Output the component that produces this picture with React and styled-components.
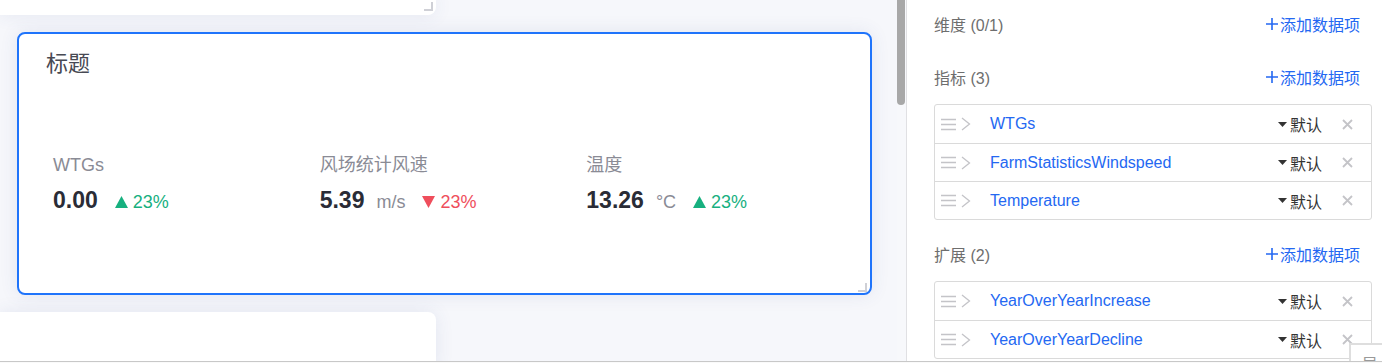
import React from "react";
import styled, { createGlobalStyle } from "styled-components";

const GlobalStyle = createGlobalStyle`
  html, body { margin: 0; padding: 0; background: #fff; }
  body { font-family: "Liberation Sans", "Noto Sans CJK SC", sans-serif; }
  * { box-sizing: border-box; }
`;

const Page = styled.div`
  position: relative;
  width: 1382px;
  height: 363px;
  overflow: hidden;
  display: flex;
`;

const Canvas = styled.div`
  width: 897px;
  flex-shrink: 0;
  height: 100%;
  background: #f6f7fb;
  display: flex;
  flex-direction: column;
  align-items: flex-start;
  gap: 17px;
`;

const Card = styled.div`
  position: relative;
  flex-shrink: 0;
  background: #fff;
  box-shadow: 0 0 18px rgba(60, 80, 150, 0.1);
`;

const TopCard = styled(Card)`
  width: 436px;
  height: 15px;
  border-radius: 0 0 8px 0;
`;

const BottomCard = styled(Card)`
  width: 436px;
  height: 60px;
  border-radius: 0 8px 0 0;
`;

const MainCard = styled(Card)`
  margin-left: 17px;
  width: 855px;
  height: 263px;
  border: 2px solid #1f74fb;
  border-radius: 8px;
  padding: 15px 27px;
`;

const Handle = styled.div`
  position: absolute;
  right: ${(p) => p.$r}px;
  bottom: ${(p) => p.$b}px;
  width: 9px;
  height: 9px;
  border-right: 2px solid #cfd0d6;
  border-bottom: 2px solid #cfd0d6;
`;

const Title = styled.div`
  font-size: 22px;
  line-height: 30px;
  color: #474953;
`;

const Metrics = styled.div`
  display: grid;
  grid-template-columns: repeat(3, 266.67px);
  margin-top: 76px;
  padding-left: 7px;
`;

const Metric = styled.div`
  display: flex;
  flex-direction: column;
`;

const Label = styled.div`
  font-size: 18px;
  line-height: 20px;
  color: #8a8b95;
`;

const ValueRow = styled.div`
  display: flex;
  align-items: baseline;
  margin-top: 11px;
  height: 28px;
`;

const Value = styled.span`
  font-size: 23px;
  line-height: 28px;
  font-weight: 700;
  color: #2a2c36;
`;

const Unit = styled.span`
  font-size: 18px;
  color: #8a8b95;
  margin-left: 12px;
`;

const Change = styled.span`
  display: inline-flex;
  align-items: baseline;
  margin-left: 17px;
  font-size: 18px;
  color: ${(p) => (p.$up ? "#17b07f" : "#ef4e5c")};
  svg { margin-right: 5px; }
`;

const ScrollTrack = styled.div`
  width: 9px;
  flex-shrink: 0;
  background: #f7f8fb;
`;

const Thumb = styled.div`
  width: 8px;
  height: 105px;
  background: #a8a8a8;
  border-radius: 0 0 4px 4px;
`;

const Panel = styled.div`
  width: 476px;
  flex-shrink: 0;
  border-left: 1px solid #e0e0e3;
  background: #fff;
  padding: 5px 10px 0 27px;
  display: flex;
  flex-direction: column;
`;

const Section = styled.div`
  display: flex;
  flex-direction: column;
  flex-shrink: 0;
  & + & { margin-top: 15px; }
`;

const SectionHeader = styled.div`
  height: 38px;
  display: flex;
  align-items: center;
  justify-content: space-between;
  padding-right: 12px;
`;

const HeaderTitle = styled.span`
  font-size: 16px;
  color: #6e6e6e;
`;

const AddLink = styled.span`
  display: inline-flex;
  align-items: center;
  gap: 2px;
  font-size: 16px;
  color: #2468f2;
`;

const List = styled.div`
  margin-top: 8px;
  border: 1px solid #dadada;
  border-radius: 3px;
`;

const Row = styled.div`
  height: 38px;
  display: flex;
  align-items: center;
  padding: 0 18px 0 6px;
  & + & { border-top: 1px solid #dadada; }
`;

const Grip = styled.svg`
  flex-shrink: 0;
`;

const Chevron = styled.svg`
  flex-shrink: 0;
  margin-left: 5px;
`;

const FieldName = styled.span`
  margin-left: 19px;
  flex: 1;
  font-size: 16px;
  color: #2468f2;
`;

const TypeSelect = styled.span`
  display: inline-flex;
  align-items: center;
  gap: 3px;
  font-size: 16px;
  color: #333;
`;

const Remove = styled.svg`
  margin-left: 20px;
  flex-shrink: 0;
`;

const Overlay = styled.div`
  position: absolute;
  left: 1349px;
  top: 343px;
  width: 70px;
  height: 40px;
  background: #fff;
  border: 2px solid #dedede;
  padding: 10px 0 0 11px;
  font-size: 16px;
  line-height: 20px;
  color: #999;
  z-index: 2;
`;

const BottomEdge = styled.div`
  position: absolute;
  left: 0;
  right: 0;
  top: 361px;
  height: 2px;
  border-top: 1px solid #c8c8c8;
  background: #fafafa;
  z-index: 3;
`;

const Tri = ({ up, color }) => (
  <svg width="13" height="12" viewBox="0 0 13 12">
    {up ? (
      <polygon points="6.5,0 13,12 0,12" fill={color} />
    ) : (
      <polygon points="0,0 13,0 6.5,12" fill={color} />
    )}
  </svg>
);

const metrics = [
  { label: "WTGs", value: "0.00", unit: null, up: true },
  { label: "风场统计风速", value: "5.39", unit: "m/s", up: false },
  { label: "温度", value: "13.26", unit: "°C", up: true },
];

const Plus = () => (
  <svg width="12" height="12" viewBox="0 0 12 12">
    <path d="M6 0v12M0 6h12" stroke="#2468f2" strokeWidth="1.6" />
  </svg>
);

const FieldRow = ({ name }) => (
  <Row>
    <Grip width="15" height="13" viewBox="0 0 15 13">
      <path d="M0 1.5h15M0 6.5h15M0 11.5h15" stroke="#c4c4c8" strokeWidth="1.6" />
    </Grip>
    <Chevron width="10" height="14" viewBox="0 0 10 14">
      <polyline points="1,1 8.5,7 1,13" fill="none" stroke="#c4c4c8" strokeWidth="1.3" />
    </Chevron>
    <FieldName>{name}</FieldName>
    <TypeSelect>
      <svg width="9" height="5" viewBox="0 0 9 5">
        <polygon points="0,0 9,0 4.5,5" fill="#333" />
      </svg>
      默认
    </TypeSelect>
    <Remove width="11" height="11" viewBox="0 0 11 11">
      <path d="M1 1l9 9M10 1l-9 9" stroke="#c4c4c8" strokeWidth="1.8" />
    </Remove>
  </Row>
);

const SectionBlock = ({ title, fields }) => (
  <Section>
    <SectionHeader>
      <HeaderTitle>{title}</HeaderTitle>
      <AddLink>
        <Plus />
        添加数据项
      </AddLink>
    </SectionHeader>
    {fields.length > 0 && (
      <List>
        {fields.map((f) => (
          <FieldRow key={f} name={f} />
        ))}
      </List>
    )}
  </Section>
);

export default function App() {
  return (
    <>
      <GlobalStyle />
      <Page>
        <Canvas>
          <TopCard>
            <Handle $r={3} $b={4} />
          </TopCard>
          <MainCard>
            <Title>标题</Title>
            <Metrics>
              {metrics.map((m) => (
                <Metric key={m.label}>
                  <Label>{m.label}</Label>
                  <ValueRow>
                    <Value>{m.value}</Value>
                    {m.unit && <Unit>{m.unit}</Unit>}
                    <Change $up={m.up}>
                      <Tri up={m.up} color={m.up ? "#17b07f" : "#ef4e5c"} />
                      23%
                    </Change>
                  </ValueRow>
                </Metric>
              ))}
            </Metrics>
            <Handle $r={3} $b={1} />
          </MainCard>
          <BottomCard />
        </Canvas>
        <ScrollTrack>
          <Thumb />
        </ScrollTrack>
        <Panel>
          <SectionBlock title="维度 (0/1)" fields={[]} />
          <SectionBlock
            title="指标 (3)"
            fields={["WTGs", "FarmStatisticsWindspeed", "Temperature"]}
          />
          <SectionBlock
            title="扩展 (2)"
            fields={["YearOverYearIncrease", "YearOverYearDecline"]}
          />
        </Panel>
        <Overlay>导入</Overlay>
        <BottomEdge />
      </Page>
    </>
  );
}
